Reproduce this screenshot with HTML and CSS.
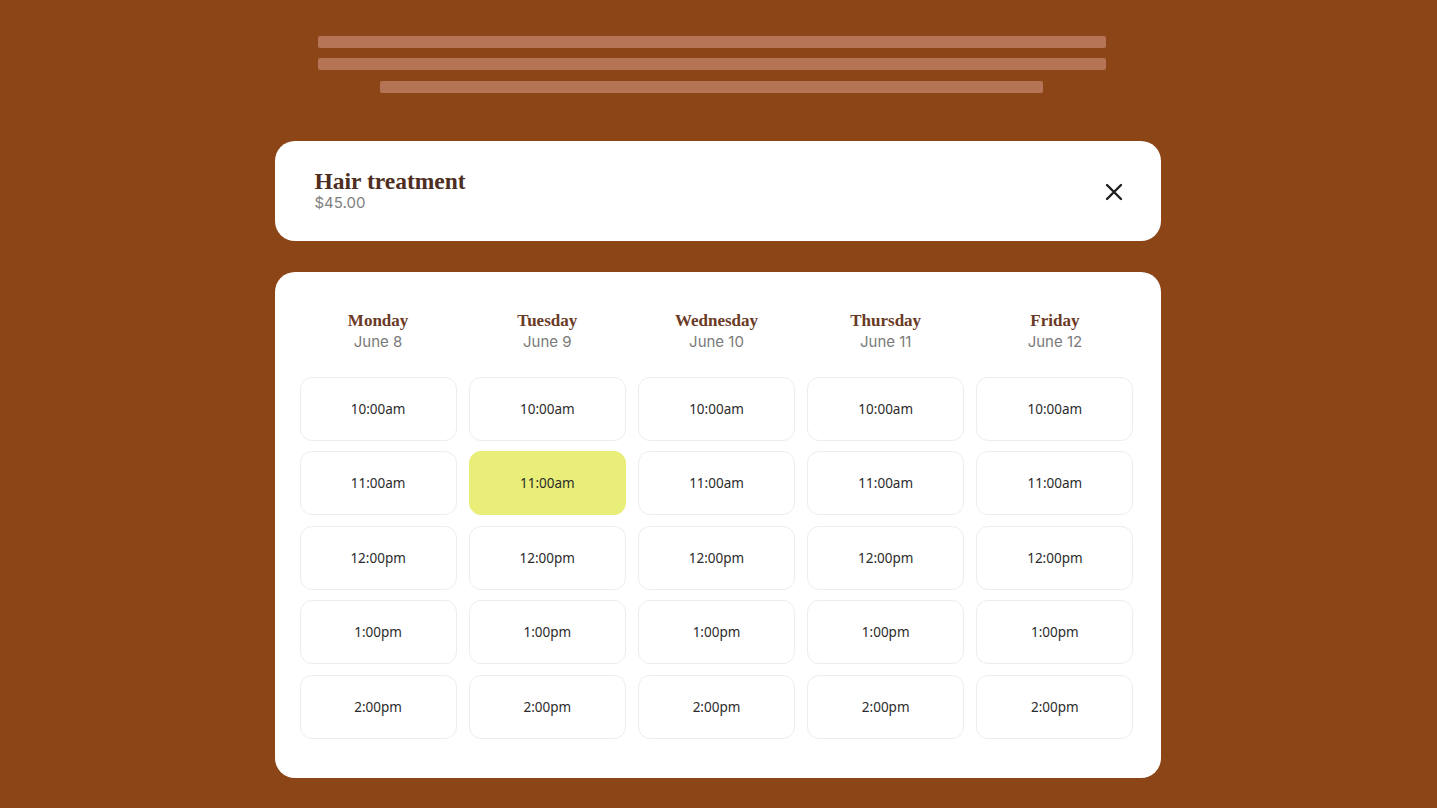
FILE: index.html
```html
<!DOCTYPE html>
<html lang="en">
<head>
    <meta charset="UTF-8">
    <meta name="viewport" content="width=device-width, initial-scale=1.0">
    <title>Book a time</title>
    <link rel="stylesheet" href="styles.css">
</head>
<body>
    <div class="page">
        <div class="intro">
            <div class="line"></div>
            <div class="line"></div>
            <div class="line short"></div>
        </div>

        <div class="card service">
            <div>
                <h1 class="service-name">Hair treatment</h1>
                <div class="service-price">$45.00</div>
            </div>
            <button class="close" aria-label="Close">
                <svg width="18" height="18" viewBox="0 0 18 18">
                    <path d="M2 2 L16 16 M16 2 L2 16" stroke="#1f1f1f" stroke-width="2.4" stroke-linecap="round"/>
                </svg>
            </button>
        </div>

        <div class="card calendar">
            <div class="day">
                <div class="day-head"><div class="day-name">Monday</div><div class="day-date">June 8</div></div>
                <button class="slot">10:00am</button>
                <button class="slot">11:00am</button>
                <button class="slot">12:00pm</button>
                <button class="slot">1:00pm</button>
                <button class="slot">2:00pm</button>
            </div>
            <div class="day">
                <div class="day-head"><div class="day-name">Tuesday</div><div class="day-date">June 9</div></div>
                <button class="slot">10:00am</button>
                <button class="slot selected">11:00am</button>
                <button class="slot">12:00pm</button>
                <button class="slot">1:00pm</button>
                <button class="slot">2:00pm</button>
            </div>
            <div class="day">
                <div class="day-head"><div class="day-name">Wednesday</div><div class="day-date">June 10</div></div>
                <button class="slot">10:00am</button>
                <button class="slot">11:00am</button>
                <button class="slot">12:00pm</button>
                <button class="slot">1:00pm</button>
                <button class="slot">2:00pm</button>
            </div>
            <div class="day">
                <div class="day-head"><div class="day-name">Thursday</div><div class="day-date">June 11</div></div>
                <button class="slot">10:00am</button>
                <button class="slot">11:00am</button>
                <button class="slot">12:00pm</button>
                <button class="slot">1:00pm</button>
                <button class="slot">2:00pm</button>
            </div>
            <div class="day">
                <div class="day-head"><div class="day-name">Friday</div><div class="day-date">June 12</div></div>
                <button class="slot">10:00am</button>
                <button class="slot">11:00am</button>
                <button class="slot">12:00pm</button>
                <button class="slot">1:00pm</button>
                <button class="slot">2:00pm</button>
            </div>
        </div>
    </div>
</body>
</html>
```

FILE: styles.css
```css
body {
    margin: 0;
    background-color: #8b4517;
    font-family: "Inter", "Liberation Sans", sans-serif;
}
.page {
    width: 886px;
    margin: 0 auto;
    padding-top: 36px;
    position: relative;
    left: -1px;
}
.intro {
    display: flex;
    flex-direction: column;
    align-items: center;
    gap: 10px;
    margin-bottom: 48px;
    padding-right: 12px;
}
.line {
    width: 788px;
    height: 12px;
    border-radius: 2px;
    background-color: #b57456;
}
.line.short {
    width: 663px;
    margin-top: 1px;
}
.card {
    background-color: #fff;
    border-radius: 20px;
}
.service {
    height: 100px;
    box-sizing: border-box;
    padding: 0 38px 2px 40px;
    display: flex;
    align-items: center;
    justify-content: space-between;
    margin-bottom: 31px;
}
.service-name {
    margin: 0;
    font-family: "Liberation Serif", serif;
    font-size: 23.5px;
    font-weight: bold;
    color: #4e2e22;
    line-height: 26px;
}
.service-price {
    font-size: 15px;
    color: #808080;
    line-height: 20px;
    margin-top: -1px;
}
.close {
    border: none;
    background: none;
    padding: 0;
    width: 18px;
    height: 18px;
    cursor: pointer;
    margin-top: 4px;
}
.calendar {
    box-sizing: border-box;
    height: 506px;
    padding: 38px 27px 38px 25px;
    display: grid;
    grid-template-columns: repeat(5, 1fr);
    gap: 12px;
}
.day {
    display: flex;
    flex-direction: column;
    gap: 10.5px;
}
.day-head {
    text-align: center;
    height: 56px;
}
.day-name {
    font-family: "Liberation Serif", serif;
    font-weight: bold;
    font-size: 17px;
    color: #6a3a26;
    line-height: 22px;
}
.day-date {
    font-size: 15px;
    color: #7a7a7a;
    line-height: 20px;
}
.slot {
    height: 64px;
    border: 1px solid #ededed;
    border-radius: 12px;
    background-color: #fff;
    font-family: "Noto Sans", "Liberation Sans", sans-serif;
    font-size: 13.5px;
    color: #2b2b2b;
    cursor: pointer;
}
.slot.selected {
    background-color: #e8ee78;
    border-color: #e8ee78;
}
```
